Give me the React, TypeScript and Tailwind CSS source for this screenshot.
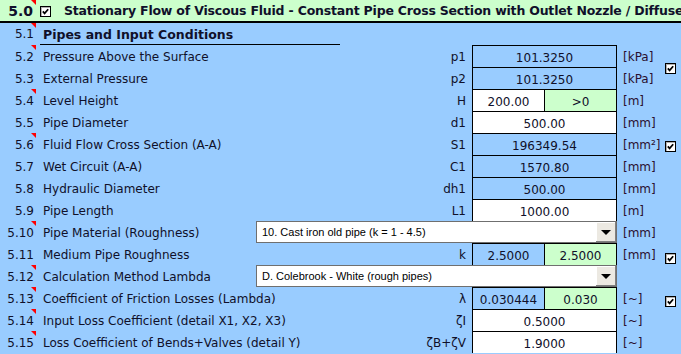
import React from "react"

type Row = {
  n: string
  label: string
  sym?: string
  v?: string
  v2?: string
  bg?: "blue" | "white"
  unit?: string
  mark?: boolean
  check?: string
  combo?: string
}

const rows: Row[] = [
  { n: "5.2", label: "Pressure Above the Surface", sym: "p1", v: "101.3250", bg: "blue", unit: "[kPa]", mark: true, check: "top-[18px]" },
  { n: "5.3", label: "External Pressure", sym: "p2", v: "101.3250", bg: "blue", unit: "[kPa]" },
  { n: "5.4", label: "Level Height", sym: "H", v: "200.00", v2: ">0", bg: "white", unit: "[m]", mark: true },
  { n: "5.5", label: "Pipe Diameter", sym: "d1", v: "500.00", bg: "white", unit: "[mm]" },
  { n: "5.6", label: "Fluid Flow Cross Section (A-A)", sym: "S1", v: "196349.54", bg: "blue", unit: "[mm²]", mark: true, check: "top-[8px]" },
  { n: "5.7", label: "Wet Circuit (A-A)", sym: "C1", v: "1570.80", bg: "blue", unit: "[mm]" },
  { n: "5.8", label: "Hydraulic Diameter", sym: "dh1", v: "500.00", bg: "blue", unit: "[mm]" },
  { n: "5.9", label: "Pipe Length", sym: "L1", v: "1000.00", bg: "white", unit: "[m]" },
  { n: "5.10", label: "Pipe Material (Roughness)", combo: "10. Cast iron old pipe (k = 1 - 4.5)", unit: "[mm]", mark: true },
  { n: "5.11", label: "Medium Pipe Roughness", sym: "k", v: "2.5000", v2: "2.5000", bg: "blue", unit: "[mm]", check: "top-[10px]" },
  { n: "5.12", label: "Calculation Method Lambda", combo: "D. Colebrook - White (rough pipes)", mark: true },
  { n: "5.13", label: "Coefficient of Friction Losses (Lambda)", sym: "λ", v: "0.030444", v2: "0.030", bg: "blue", unit: "[~]", mark: true, check: "top-[9px]" },
  { n: "5.14", label: "Input Loss Coefficient (detail X1, X2, X3)", sym: "ζI", v: "0.5000", bg: "white", unit: "[~]", mark: true },
  { n: "5.15", label: "Loss Coefficient of Bends+Valves (detail Y)", sym: "ζB+ζV", v: "1.9000", bg: "white", unit: "[~]", mark: true },
]

// red comment corner like in Excel
function Mark() {
  return <span className="absolute top-0 right-0 w-0 h-0 border-t-[5px] border-t-[#ff0000] border-l-[5px] border-l-transparent" />
}

function Check({ className }: { className: string }) {
  return (
    <span className={`absolute w-[11px] h-[11px] bg-white border border-black flex items-center justify-center shadow-[inset_1px_1px_0_#b0b0b0] ${className}`}>
      <svg viewBox="0 0 9 9" className="w-[9px] h-[9px]">
        <path d="M1.8 4.4 L3.6 6.4 L7.2 2.2" stroke="#000" strokeWidth="1.7" fill="none" />
      </svg>
    </span>
  )
}

function Combo({ text }: { text: string }) {
  return (
    <div className="shrink-0 w-[361px] h-[22px] flex bg-white border border-[#6f6f6f]">
      <span className="flex-1 pl-[5px] font-['Liberation_Sans',sans-serif] text-[11px] leading-[20px] text-black whitespace-nowrap overflow-hidden">
        {text}
      </span>
      <span className="w-[20px] h-full bg-[#ece9e2] flex items-center justify-center shadow-[inset_-1px_-1px_0_#808080,inset_1px_1px_0_#ffffff]">
        <span className="w-0 h-0 border-t-[5px] border-t-black border-x-[5px] border-x-transparent" />
      </span>
    </div>
  )
}

function SheetRow({ r }: { r: Row }) {
  const cellBg = r.bg === "white" ? "bg-white" : "bg-[#99ccff]"
  return (
    <div className="relative flex h-[22px] leading-[24px] whitespace-nowrap">
      <div className="relative shrink-0 w-[36px] text-right pr-[2px]">
        {r.n}
        {r.mark && <Mark />}
      </div>
      {r.combo ? (
        <>
          <div className="shrink-0 w-[220px] pl-[7px] overflow-hidden">{r.label}</div>
          <Combo text={r.combo} />
        </>
      ) : (
        <>
          <div className="shrink-0 w-[436px] flex justify-between pl-[7px] pr-[6px]">
            <span>{r.label}</span>
            <span>{r.sym}</span>
          </div>
          <div className="shrink-0 w-[145px] flex border-x border-t border-black">
            {r.v2 ? (
              <>
                <span className={`w-[72px] text-center border-r border-black ${cellBg}`}>{r.v}</span>
                <span className="flex-1 text-center bg-[#ccffcc]">{r.v2}</span>
              </>
            ) : (
              <span className={`flex-1 text-center ${cellBg}`}>{r.v}</span>
            )}
          </div>
        </>
      )}
      <div className="shrink-0 w-[48px] pl-[6px] text-[#2a1030]">{r.unit}</div>
      {r.check && <Check className={`left-[665px] ${r.check}`} />}
    </div>
  )
}

export default function App() {
  return (
    <div className="w-[681px] h-[354px] overflow-hidden bg-[#99ccff] font-['DejaVu_Sans',sans-serif] text-[12px] text-[#10102a]">
      {/* title */}
      <div className="relative flex h-[23px] bg-[#ccffcc] border-b-2 border-black whitespace-nowrap font-bold text-[12.5px] leading-[22px]">
        <div className="relative shrink-0 w-[36px] text-right pr-[3px] text-[14px]">
          5.0
          <Mark />
        </div>
        <Check className="left-[40px] top-[6px]" />
        <div className="pl-[28px] tracking-[-0.2px]">Stationary Flow of Viscous Fluid - Constant Pipe Cross Section with Outlet Nozzle / Diffuser</div>
      </div>
      {/* 5.1 */}
      <div className="flex h-[22px] leading-[23px] whitespace-nowrap">
        <div className="relative shrink-0 w-[36px] text-right pr-[2px]">
          5.1
          <Mark />
        </div>
        <div className="ml-[4px] w-[300px] pl-[3px] border-b border-black font-bold text-[12.5px]">Pipes and Input Conditions</div>
      </div>
      {rows.map((r) => (
        <SheetRow key={r.n} r={r} />
      ))}
    </div>
  )
}
